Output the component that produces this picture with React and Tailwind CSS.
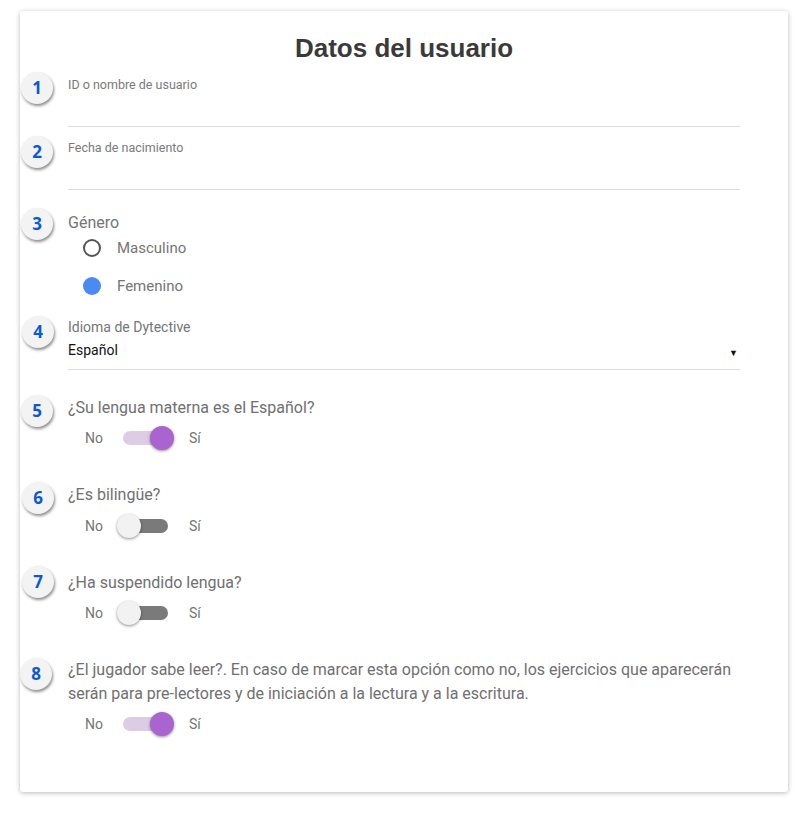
import React from "react";

function Badge({ n, off = 1 }) {
  return (
    <div
      className="w-[32px] h-[32px] rounded-full bg-[#f3f3f3] flex items-center justify-center shadow-[1px_2px_3px_rgba(0,0,0,0.45)] text-[#0b59d6] font-bold text-[17px]"
      style={{ marginLeft: off, fontFamily: '"Open Sans", "Noto Sans", sans-serif' }}
    >
      {n}
    </div>
  );
}

function Row({ n, off, top, children }) {
  return (
    <div className="flex" style={{ marginTop: top }}>
      <div className="w-[48px] shrink-0">
        <Badge n={n} off={off} />
      </div>
      <div className="w-[672px]">{children}</div>
    </div>
  );
}

function Toggle({ on, mt }) {
  return (
    <div className="flex items-center h-[24px] pl-[17px] text-[14px] text-[#757575]" style={{ marginTop: mt }}>
      <span className="w-[32px]">No</span>
      <div className="relative w-[57px] h-[24px]">
        <div
          className={
            "absolute left-[6px] top-[5px] w-[45px] h-[14px] rounded-full " +
            (on ? "bg-[#dccde4]" : "bg-[#7a7a7a]")
          }
        />
        <div
          className={
            "absolute top-0 w-[24px] h-[24px] rounded-full shadow-[0_1px_3px_rgba(0,0,0,0.45)] " +
            (on ? "left-[33px] bg-[#aa64d0]" : "left-0 bg-[#f2f2f2]")
          }
        />
      </div>
      <span className="ml-[15px]">Sí</span>
    </div>
  );
}

export default function App() {
  return (
    <div className="w-[804px] h-[815px] bg-white" style={{ fontFamily: 'Roboto, "Liberation Sans", sans-serif' }}>
      <div className="ml-[20px] mt-[11px] w-[768px] h-[781px] bg-white rounded-[3px] shadow-[0_1px_5px_rgba(0,0,0,0.28)] pt-[22px] overflow-hidden inline-block">
        <h1
          className="text-center text-[26px] leading-[30px] font-bold text-[#3a3a3a]"
          style={{ fontFamily: '"Liberation Sans", Arial, sans-serif' }}
        >
          Datos del usuario
        </h1>

        <Row n="1" off={1} top={9}>
          <div className="mt-[5px] text-[12.5px] leading-[16px] text-[#7a7a7a]">ID o nombre de usuario</div>
          <div className="h-[34px] border-b border-[#dddddd]" />
        </Row>

        <Row n="2" off={1} top={9}>
          <div className="mt-[4px] text-[12.5px] leading-[16px] text-[#7a7a7a]">Fecha de nacimiento</div>
          <div className="h-[34px] border-b border-[#dddddd]" />
        </Row>

        <Row n="3" off={1} top={18}>
          <div className="mt-[5px] text-[16px] leading-[20px] text-[#757575]">Género</div>
          <div className="flex items-center h-[28px] mt-[1px] pl-[15px]">
            <div className="w-[18px] h-[18px] rounded-full border-2 border-[#555555]" />
            <span className="ml-[16px] text-[15px] text-[#757575]">Masculino</span>
          </div>
          <div className="flex items-center h-[28px] mt-[10px] pl-[15px]">
            <div className="w-[18px] h-[18px] rounded-full bg-[#4a8af4]" />
            <span className="ml-[16px] text-[15px] text-[#757575]">Femenino</span>
          </div>
        </Row>

        <Row n="4" off={2} top={16}>
          <div className="mt-[2px] text-[14px] leading-[18px] text-[#757575]">Idioma de Dytective</div>
          <div className="h-[34px] pt-[4px] border-b border-[#dddddd] flex items-start justify-between">
            <span className="text-[14px] leading-[20px] text-[#111111]">Español</span>
            <span className="text-[9px] leading-[20px] mt-[3px] mr-[2px] text-[#111111]">▼</span>
          </div>
        </Row>

        <Row n="5" off={1} top={25}>
          <div className="mt-[1px] text-[16px] leading-[24px] text-[#707070]">¿Su lengua materna es el Español?</div>
          <Toggle on mt={6} />
        </Row>

        <Row n="6" off={2} top={32}>
          <div className="mt-[1px] text-[16px] leading-[24px] text-[#707070]">¿Es bilingüe?</div>
          <Toggle on={false} mt={7} />
        </Row>

        <Row n="7" off={2} top={28}>
          <div className="mt-[5px] text-[16px] leading-[24px] text-[#707070]">¿Ha suspendido lengua?</div>
          <Toggle on={false} mt={6} />
        </Row>

        <Row n="8" off={0} top={33}>
          <div className="text-[16px] leading-[24px] text-[#707070]">
            ¿El jugador sabe leer?. En caso de marcar esta opción como no, los ejercicios que aparecerán serán para pre-lectores y de iniciación a la lectura y a la escritura.
          </div>
          <Toggle on mt={6} />
        </Row>
      </div>
    </div>
  );
}
